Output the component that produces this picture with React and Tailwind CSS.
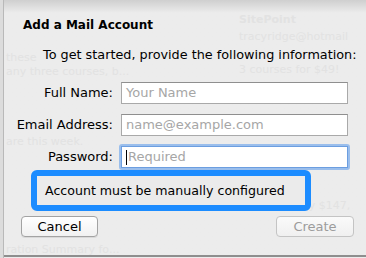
import React from "react";

const font = { fontFamily: '"DejaVu Sans", "Liberation Sans", sans-serif' };

function Field({ label, placeholder, focused }) {
  return (
    <div className="flex items-center h-[22px]">
      <div className="w-[109px] text-right text-[13px] text-black leading-4">{label}</div>
      <div className="ml-[8px] w-[227px] h-[22px] relative">
        {focused && (
          <div className="absolute -inset-[2px] rounded-[3px] border-[3px] border-[#86b3ec] opacity-80"></div>
        )}
        <div
          className={
            "relative h-full bg-white border flex items-center pl-[4px] text-[13px] " +
            (focused ? "border-[#6c9ee0]" : "border-[#a9a9a9] border-t-[#8f8f8f]")
          }
        >
          {focused && <div className="w-px h-[15px] bg-black mr-px"></div>}
          <span className="text-[#a6a6a6] leading-4">{placeholder}</span>
        </div>
      </div>
    </div>
  );
}

function Ghost() {
  return (
    <div className="absolute inset-0 text-[11px] text-[#e2e2e2] leading-4 pointer-events-none">
      <div className="absolute left-[235px] top-[12px] font-bold">SitePoint</div>
      <div className="absolute left-[235px] top-[29px]">tracyridge@hotmail</div>
      <div className="absolute left-[235px] top-[62px]">3 courses for $49!</div>
      <div className="absolute left-[2px] top-[50px]">these</div>
      <div className="absolute left-[2px] top-[64px]">any three courses, b...</div>
      <div className="absolute left-[2px] top-[134px]">are this week.</div>
      <div className="absolute left-[2px] top-[242px]">ration Summary fo...</div>
      <div className="absolute left-[262px] top-[198px]">Normally $147,</div>
    </div>
  );
}

export default function App() {
  return (
    <div className="w-[366px] h-[258px] overflow-hidden flex bg-[#ececec] relative" style={font}>
      <div className="w-[4px] h-full bg-[#dcdcdc] border-r border-[#b9b9b9]"></div>
      <div className="flex-1 flex flex-col relative bg-gradient-to-b from-[#cfcfcf] via-[#ececec] via-[5%] to-[#ececec]">
        <Ghost />
        <div className="relative flex flex-col">
          <div className="mt-[17px] ml-[19px] text-[12px] font-bold leading-4 text-black">
            Add a Mail Account
          </div>
          <div className="mt-[14px] ml-[39px] text-[12.8px] leading-4 text-black">
            To get started, provide the following information:
          </div>
          <div className="mt-[19px] flex flex-col gap-[10px]">
            <Field label="Full Name:" placeholder="Your Name" />
            <Field label="Email Address:" placeholder="name@example.com" />
            <Field label="Password:" placeholder="Required" focused />
          </div>
          <div className="mt-[2px] ml-[27px] w-[280px] h-[41px] border-[6px] border-[#1c8cff] rounded-[6px] bg-[#ebebeb] flex items-center pl-[8px]">
            <span className="text-[12.6px] leading-4 text-black">Account must be manually configured</span>
          </div>
          <div className="mt-[5px] flex items-center">
            <button className="ml-[17px] w-[77px] h-[21px] rounded-[4px] border border-[#a3a3a3] bg-gradient-to-b from-white to-[#f1f1f1] text-[13px] leading-4 text-black shadow-[0_1px_0_rgba(0,0,0,0.08)]">
              Cancel
            </button>
            <button className="ml-auto mr-[12px] w-[78px] h-[21px] rounded-[4px] border border-[#c4c4c4] bg-gradient-to-b from-[#fafafa] to-[#f0f0f0] text-[13px] leading-4 text-[#9c9c9c]">
              Create
            </button>
          </div>
        </div>
        <div className="absolute left-0 right-0 top-[255px] h-[2px] bg-[#8e8e8e]"></div>
      </div>
    </div>
  );
}
